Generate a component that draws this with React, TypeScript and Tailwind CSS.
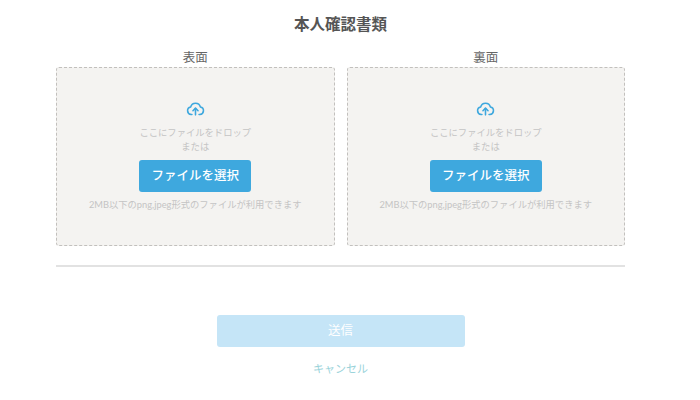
const Dropzone = ({ label }: { label: string }) => {
  return (
    <div className="flex-1">
      <p className="h-[18px] text-center text-[12.5px] leading-[18px] text-[#666]">{label}</p>
      <div className="flex h-[179px] flex-col items-center rounded-[3px] border border-dashed border-[#c2c0bd] bg-[#f4f3f1] pt-[31px]">
        <svg viewBox="0 0 24 24" className="h-[19px] w-[19px]" fill="none" stroke="#3ea8de" strokeWidth="2" strokeLinecap="round" strokeLinejoin="round" aria-hidden="true">
          <path d="M7.5 19.5H6.5a4.8 4.8 0 0 1-.6-9.5 6.4 6.4 0 0 1 12.3 0 4.8 4.8 0 0 1-.7 9.5h-1" />
          <path d="M12 20v-8" />
          <path d="M8.8 14.8 12 11.6l3.2 3.2" />
        </svg>
        <p className="mt-[8px] text-[9.3px] leading-[14px] text-[#c4c4c4]">ここにファイルをドロップ</p>
        <p className="text-[9.3px] leading-[14px] text-[#c4c4c4]">または</p>
        <button className="mt-[6px] h-[32px] w-[112px] rounded-[3px] bg-[#3ea8de] text-[12.5px] font-medium text-white">
          ファイルを選択
        </button>
        <p className="mt-[6px] text-[9.3px] leading-[14px] text-[#c4c4c4]">2MB以下のpng,jpeg形式のファイルが利用できます</p>
      </div>
    </div>
  );
};

const App = () => {
  return (
    <div className="h-[400px] w-[700px] bg-white font-['Lato','Noto_Sans_CJK_JP',sans-serif]">
      <div className="ml-[56px] w-[569px] pt-[14px]">
        <h1 className="h-[35px] text-center text-[15.5px] font-bold leading-[20px] text-[#555]">本人確認書類</h1>
        <div className="flex gap-[12px]">
          <Dropzone label="表面" />
          <Dropzone label="裏面" />
        </div>
        <div className="mt-[19px] border-t-2 border-[#e2e2e2]" />
        <div className="mt-[48px] flex flex-col items-center">
          <button className="h-[32px] w-[248px] rounded-[3px] bg-[#c5e5f7] pt-[1px] text-[12.5px] font-normal text-white">送信</button>
          <a href="#" className="mt-[14px] text-[11px] leading-[16px] text-[#9ad3da]">キャンセル</a>
        </div>
      </div>
    </div>
  );
};

export default App;
